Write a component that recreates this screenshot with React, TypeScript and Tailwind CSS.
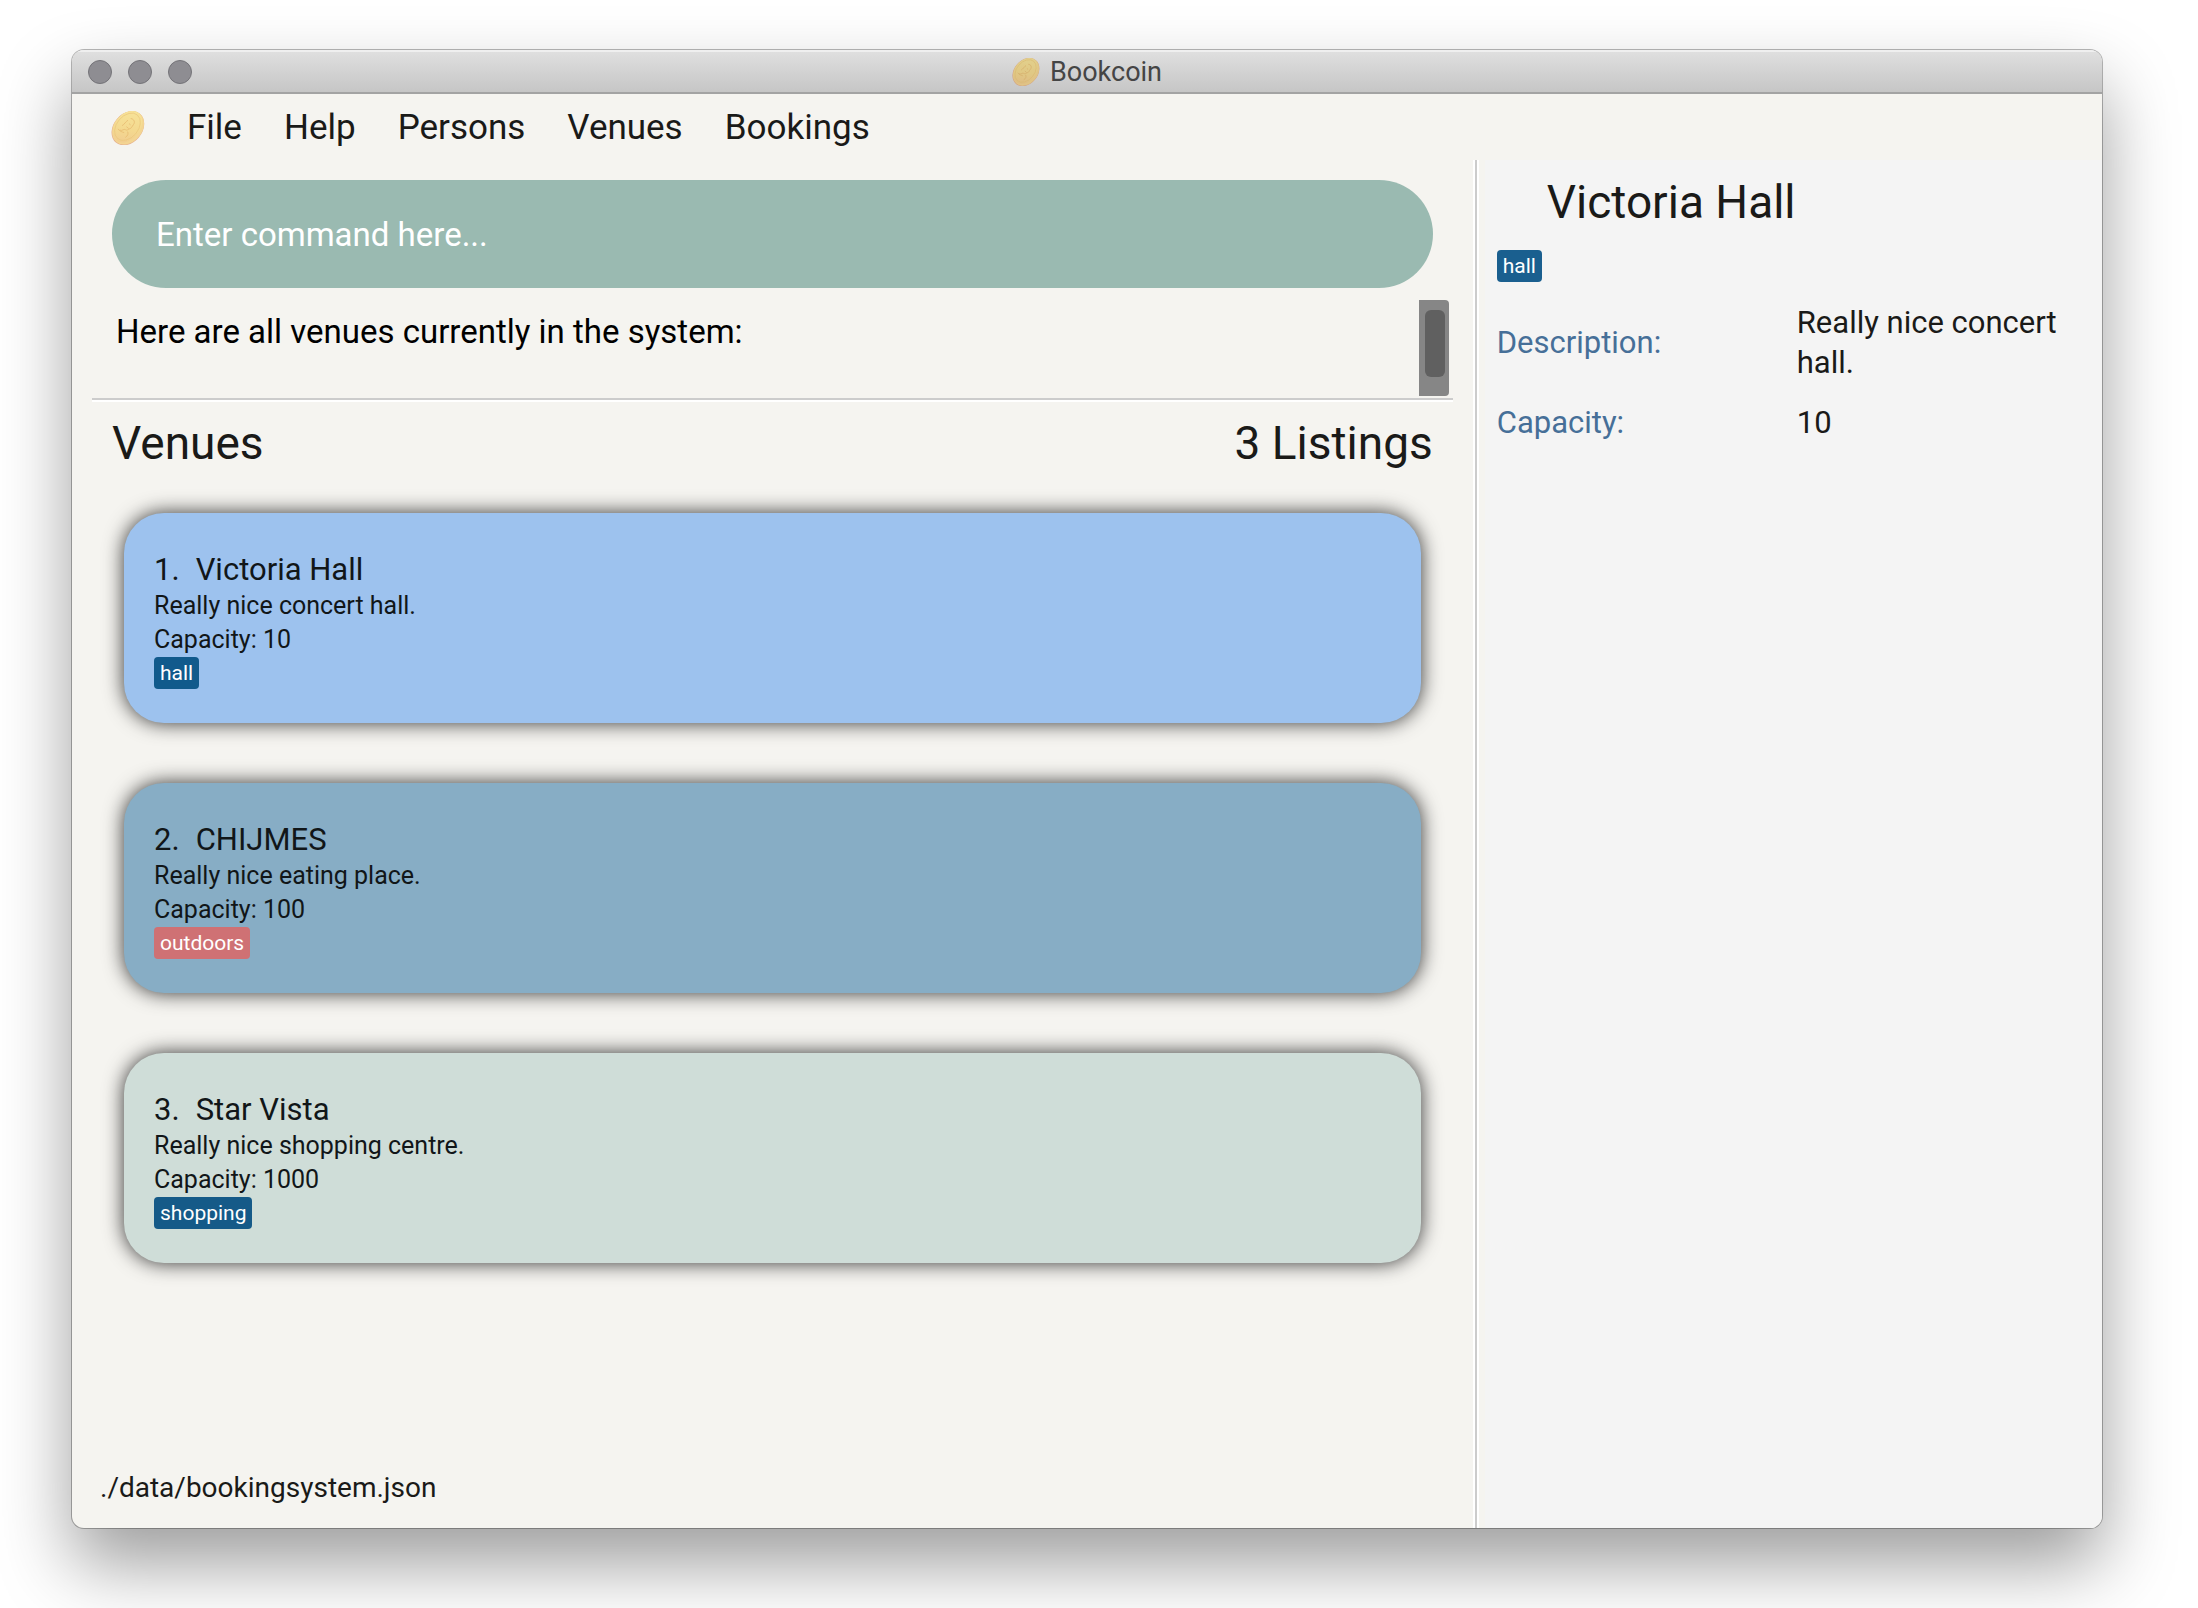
import { useId } from "react";

type Venue = {
  name: string;
  description: string;
  capacity: number;
  tag: string;
  tagClass: string;
  cardClass: string;
};

const venues: Venue[] = [
  {
    name: "Victoria Hall",
    description: "Really nice concert hall.",
    capacity: 10,
    tag: "hall",
    tagClass: "bg-[#115a8c]",
    cardClass: "bg-[#9dc2ee]",
  },
  {
    name: "CHIJMES",
    description: "Really nice eating place.",
    capacity: 100,
    tag: "outdoors",
    tagClass: "bg-[#cf7174]",
    cardClass: "bg-[#87adc5]",
  },
  {
    name: "Star Vista",
    description: "Really nice shopping centre.",
    capacity: 1000,
    tag: "shopping",
    tagClass: "bg-[#155a88]",
    cardClass: "bg-[#cfddd8]",
  },
];

const menus = ["File", "Help", "Persons", "Venues", "Bookings"];

function Coin({ className }: { className: string }) {
  const id = useId();
  return (
    <svg viewBox="0 0 34 34" className={className} aria-hidden="true">
      <defs>
        <linearGradient id={id} x1="0.2" y1="0" x2="0.7" y2="1">
          <stop offset="0" stopColor="#f7e49a" />
          <stop offset="0.6" stopColor="#f4d98f" />
          <stop offset="1" stopColor="#f1cc90" />
        </linearGradient>
      </defs>
      <g transform="rotate(40 17 17)">
        <ellipse cx="17" cy="17.2" rx="14.4" ry="18.8" fill="#e6b290" />
        <ellipse cx="17" cy="16.8" rx="14" ry="18.4" fill="#f3d592" />
        <ellipse cx="15.8" cy="16.4" rx="12.6" ry="17.6" fill={`url(#${id})`} />
        <ellipse cx="15.8" cy="16.4" rx="10.8" ry="15.4" fill="none" stroke="#ebc87c" strokeWidth="0.7" />
        <path
          d="M13 8c3-2 6 0 6 3s1 3 0 5-1 4-3 4-1 3-4 4M19 20c2 1 3 3 2 6M12 11c-1 3 0 5-1 8M15 13h2M15 17h3M10 24c2 1 5 0 7-1"
          fill="none"
          stroke="#e8c076"
          strokeWidth="0.9"
        />
      </g>
    </svg>
  );
}

function Tag({ label, className }: { label: string; className: string }) {
  return (
    <span className={`inline-block rounded px-1.5 text-[21px] leading-8 text-white ${className}`}>{label}</span>
  );
}

export default function App() {
  return (
    <div className="flex h-screen flex-col bg-white pt-[50px] pr-24 pb-20 pl-[72px] font-['Roboto',sans-serif] text-[#1a1a18]">
      <div className="flex min-h-0 flex-1 flex-col overflow-hidden rounded-xl bg-[#f5f4f0] shadow-[0_0_0_1px_rgba(0,0,0,0.28),0_36px_72px_rgba(0,0,0,0.39)]">
        <header className="grid h-11 shrink-0 grid-cols-3 items-center border-b-2 border-[#a3a3a3] bg-linear-to-b from-[#e0e0e0] to-[#c6c6c6] px-4 pt-0.5 shadow-[inset_0_2px_0_#efefef]">
          <div className="flex gap-4">
            {["Close", "Minimise", "Zoom"].map((label) => (
              <button
                key={label}
                type="button"
                aria-label={label}
                className="size-6 rounded-full border border-[#747378] bg-[#8e8d92]"
              />
            ))}
          </div>
          <div className="flex items-center justify-center gap-2.5 text-[27px] leading-8 text-[#454545]">
            <Coin className="size-7 brightness-92" />
            <h1>Bookcoin</h1>
          </div>
        </header>

        <nav className="flex h-[66px] shrink-0 items-center gap-[42px] pt-0.5 pl-[39px] text-[35px]">
          <Coin className="size-[34px]" />
          {menus.map((menu) => (
            <button key={menu} type="button">
              {menu}
            </button>
          ))}
        </nav>

        <div className="flex min-h-0 flex-1">
          <main className="flex min-w-0 flex-1 flex-col pt-5 pr-[22px] pl-5">
            <div className="px-5">
              <input
                type="text"
                aria-label="Command"
                placeholder="Enter command here..."
                className="block h-[108px] w-full rounded-full bg-[#9abab1] px-11 text-[33px] text-white outline-none placeholder:text-white placeholder:opacity-100"
              />
            </div>

            <div className="flex h-28 shrink-0 border-b-2 border-[#cccccc] pt-3 pr-1 pb-0.5 pl-6 shadow-[0_2px_0_white]">
              <textarea
                readOnly
                aria-label="Result"
                value="Here are all venues currently in the system:"
                className="min-w-0 flex-1 resize-none overflow-hidden bg-transparent pt-3 text-[33px] leading-10 text-black outline-none"
              />
              <div className="w-[30px] rounded-r bg-[#868686] pt-2.5 pr-3 pl-1.5">
                <div className="h-[67px] w-5 rounded-md bg-[#606060]" />
              </div>
            </div>

            <div className="flex items-center justify-between px-5 pt-[15px] text-[46px] leading-14">
              <h2>Venues</h2>
              <p>3 Listings</p>
            </div>

            <ol className="flex flex-col gap-[60px] px-8 pt-[42px]">
              {venues.map((venue, index) => (
                <li
                  key={venue.name}
                  className={`h-[210px] rounded-[40px] px-[30px] pt-[38px] text-[25px] leading-[34px] text-[#111618] shadow-[0_0_20px_rgba(0,0,0,0.8)] ${venue.cardClass}`}
                >
                  <h3 className="flex gap-4 text-[31px] leading-[38px]">
                    <span>{index + 1}.</span>
                    <span>{venue.name}</span>
                  </h3>
                  <p>{venue.description}</p>
                  <p>Capacity: {venue.capacity}</p>
                  <div className="flex">
                    <Tag label={venue.tag} className={venue.tagClass} />
                  </div>
                </li>
              ))}
            </ol>

            <footer className="mt-auto pb-5 pl-2 text-[28px] leading-10">./data/bookingsystem.json</footer>
          </main>

          <aside className="w-[30.9%] shrink-0 border-l-2 border-[#cccccc] bg-[#f4f4f4] pt-3.5 pl-5 text-[31px] leading-10 shadow-[-2px_0_0_white,inset_2px_0_0_white,inset_8px_0_0_#f5f4f0]">
            <h2 className="pl-[50px] text-[46px] leading-14">Victoria Hall</h2>
            <div className="flex pt-5">
              <Tag label="hall" className="bg-[#1a5f8f]" />
            </div>
            <dl className="grid grid-cols-[300px_1fr] items-center gap-y-5 pt-[21px]">
              <dt className="text-[#466f98]">Description:</dt>
              <dd>Really nice concert hall.</dd>
              <dt className="text-[#466f98]">Capacity:</dt>
              <dd>10</dd>
            </dl>
          </aside>
        </div>
      </div>
    </div>
  );
}
